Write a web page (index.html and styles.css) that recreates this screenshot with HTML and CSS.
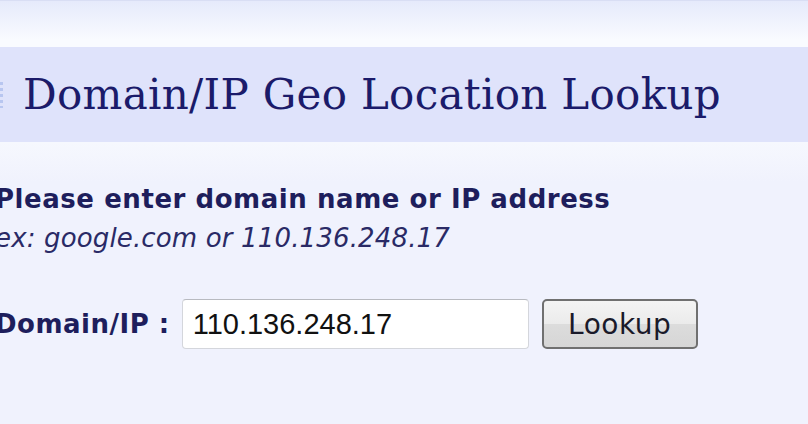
FILE: index.html
```html
<!DOCTYPE html>
<html>
<head>
<meta charset="utf-8">
<link rel="stylesheet" href="styles.css">
</head>
<body>
<div class="topbar"></div>
<div class="titlebar">
  <span class="marker"></span>
  <h1 class="title">Domain/IP Geo Location Lookup</h1>
</div>
<div class="content">
  <p class="prompt">Please enter domain name or IP address</p>
  <p class="example">ex: google.com or 110.136.248.17</p>
  <form class="form">
    <label class="label">Domain/IP :</label>
    <input class="field" type="text" value="110.136.248.17">
    <button class="btn" type="button">Lookup</button>
  </form>
</div>
</body>
</html>
```
FILE: styles.css
```css
html, body {
  margin: 0;
  padding: 0;
}
body {
  background: #f0f2fd;
  width: 808px;
  height: 424px;
  overflow: hidden;
}
.topbar {
  height: 47px;
  border-top: 1px solid #d9def4;
  box-sizing: border-box;
  background: linear-gradient(#e6eafb, #f9fbff 85%, #f9fbff);
}
.titlebar {
  height: 95px;
  background: #dfe3fb;
  display: flex;
  align-items: center;
}
.marker {
  width: 3px;
  height: 26px;
  margin-right: 20px;
  background: repeating-linear-gradient(#b8c6f0 0 3px, transparent 3px 6px);
}
.title {
  margin: 0;
  font-family: "DejaVu Serif", Georgia, serif;
  font-weight: normal;
  font-size: 42px;
  letter-spacing: 0.3px;
  color: #1b1b6a;
}
.content {
  background: linear-gradient(#f6f8fe, #f0f2fd 40px);
  margin-left: -5px;
  padding-top: 42px;
  height: 282px;
  box-sizing: border-box;
}
.prompt {
  margin: 0;
  font-family: "DejaVu Sans", Verdana, sans-serif;
  font-weight: bold;
  font-size: 26px;
  letter-spacing: 0.55px;
  color: #1e1e5c;
}
.example {
  margin: 9px 0 0;
  font-family: "DejaVu Sans", Verdana, sans-serif;
  font-style: italic;
  font-size: 26px;
  letter-spacing: 0.15px;
  color: #2a2a66;
}
.form {
  margin-top: 46px;
  display: flex;
  align-items: center;
}
.label {
  font-family: "DejaVu Sans", Verdana, sans-serif;
  font-weight: bold;
  font-size: 26px;
  letter-spacing: 0.5px;
  color: #1e1e5c;
  margin-right: 12px;
}
.field {
  width: 347px;
  height: 50px;
  box-sizing: border-box;
  border: 1px solid #d4d6dc;
  border-top-color: #b8bac0;
  border-radius: 4px;
  background: #fff;
  padding: 0 10px;
  font-family: "Liberation Sans", Arial, sans-serif;
  font-size: 29px;
  color: #111;
  margin-right: 13px;
}
.btn {
  width: 156px;
  height: 50px;
  box-sizing: border-box;
  border: 2px solid #707070;
  border-radius: 5px;
  background: linear-gradient(#f4f4f4, #ebebeb 50%, #dcdcdc 51%, #d6d6d6);
  font-family: "DejaVu Sans", Tahoma, sans-serif;
  font-size: 28px;
  letter-spacing: 0.5px;
  color: #1a1a2a;
  padding: 0;
}
```
